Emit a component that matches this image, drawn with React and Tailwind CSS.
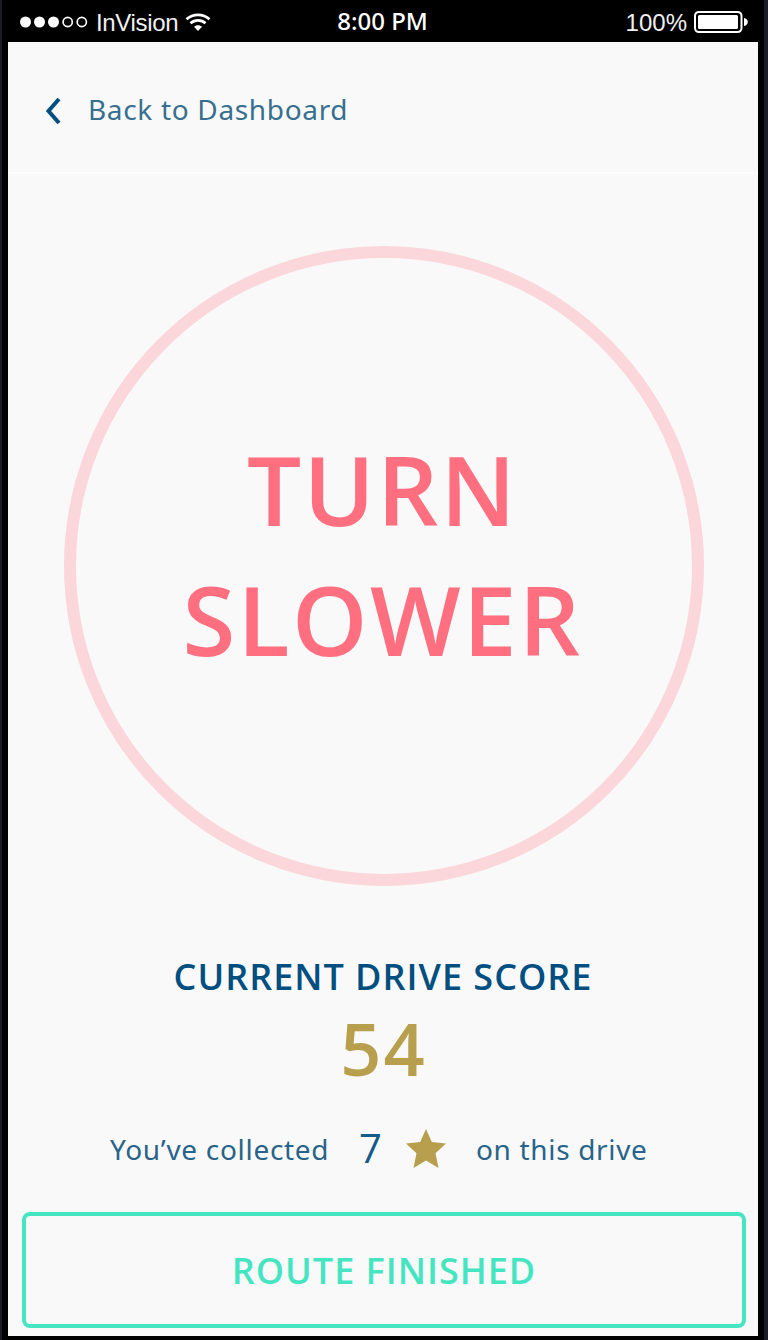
const font = "font-['Open_Sans','Noto_Sans',sans-serif]";

function StatusBar() {
  return (
    <div className="grid h-[42px] grid-cols-3 items-center pl-3 pr-[11px] text-white font-['Liberation_Sans',sans-serif]">
      <div className="flex items-center">
        <svg width="68" height="12" viewBox="0 0 68 12" className="shrink-0">
          <circle cx="5.5" cy="6" r="5.5" fill="white" />
          <circle cx="19.5" cy="6" r="5.5" fill="white" />
          <circle cx="33.5" cy="6" r="5.5" fill="white" />
          <circle cx="47.7" cy="6" r="4.6" fill="none" stroke="white" strokeWidth="1.7" />
          <circle cx="61.8" cy="6" r="4.6" fill="none" stroke="white" strokeWidth="1.7" />
        </svg>
        <span className="ml-2 w-[82px] whitespace-nowrap pt-0.5 text-[24px] leading-[42px] tracking-[-0.35px] text-[#f0f0f0]">InVision</span>
        <svg width="26" height="20" viewBox="0 0 26 20" className="ml-[7px] mt-0.5 shrink-0" fill="none" stroke="white">
          <path d="M1.5 6.2C8 0.4 18 0.4 24.500 6.200" strokeWidth="2.8" />
          <path d="M5.500 10.300C9.800 6.500 16.200 6.500 20.500 10.300" strokeWidth="2.7" />
          <path d="M9 13.800C11 11.700 15 11.700 17 13.800L13 18Z" fill="white" stroke="none" />
        </svg>
      </div>
      <span className="pb-0.5 pr-1 text-center text-[24px] font-medium leading-[38px] font-['Noto_Sans','Open_Sans',sans-serif]">8:00 PM</span>
      <div className="flex items-center justify-end">
        <span className="pt-0.5 text-[24px] leading-[42px] text-[#f0f0f0]">100%</span>
        <svg width="55" height="24" viewBox="0 0 55 24" className="ml-[7px] shrink-0">
          <rect x="1" y="1.900" width="46.500" height="20.200" rx="4" fill="none" stroke="white" strokeWidth="2" />
          <rect x="4" y="5" width="40" height="14" rx="1.500" fill="white" />
          <path d="M50 8C55 8.500 55 15.500 50 16Z" fill="white" />
        </svg>
      </div>
    </div>
  );
}

export default function App() {
  return (
    <div className={`h-[1340px] w-[768px] overflow-hidden border-l-2 border-r-4 border-[#1b1d25] bg-black ${font}`}>
      <div className="pl-1.5 pr-1">
        <StatusBar />
        <main className="h-[1294px] w-[750px] bg-[#f9f9f9] text-[#004f80]">
          <header className="h-[132px] border-b-2 border-[#fdfdfd] pt-[46px]">
            <button className="flex h-[42px] items-center pl-[37px]">
              <svg width="16" height="28" viewBox="0 0 16 28" fill="none" stroke="#004f80" strokeWidth="4" className="mt-1">
                <path d="M14 2L3.500 14L14 26" />
              </svg>
              <span className="ml-[27px] whitespace-nowrap text-[28px] leading-[42px] tracking-[0.67px] text-[#37708f] font-['Noto_Sans',sans-serif]">Back to Dashboard</span>
            </button>
          </header>
          <section className="ml-14 mt-[72px] flex h-[640px] w-[640px] flex-col items-center justify-center rounded-full border-12 border-[#fbd6da] pb-6 pr-[3px] text-[96px] font-semibold leading-[130px] text-[#ff6f80]">
            <span className="tracking-[2.3px]">TURN</span>
            <span className="tracking-[2.3px]">SLOWER</span>
          </section>
          <section className="flex flex-col items-center pt-[66px]">
            <h1 className="text-[36px] font-semibold leading-[50px] tracking-[1px]">CURRENT DRIVE SCORE</h1>
            <p className="mt-px pl-px text-[72px] font-semibold leading-[90px] tracking-[2px] text-[#b79f4d]">54</p>
          </section>
          <section className="mt-9 flex h-10 whitespace-nowrap pl-[102px] text-[28px] leading-10 text-[#286489] font-['Noto_Sans',sans-serif]">
            <span className="w-[249px] tracking-[0.7px]">You’ve collected</span>
            <span className="w-[46px] text-[40px] leading-[37px] text-[#145b89] font-['Open_Sans',sans-serif]">7</span>
            <svg width="42" height="42" viewBox="0 0 42 42" className="shrink-0" fill="#b79f4d">
              <path d="M21 0L26.800 13L41 14.500L30.500 24.300L33.500 39L21 31.500L8.500 39L11.500 24.300L1 14.500L15.200 13Z" />
            </svg>
            <span className="ml-[29px] tracking-[0.67px]">on this drive</span>
          </section>
          <button className="ml-3.5 mt-[43px] flex h-[116px] w-[724px] items-center justify-center rounded-lg border-4 border-[#45e5c2] pt-0.5 text-[36px] font-semibold leading-[50px] tracking-[1px] text-[#45e5c2]">
            ROUTE FINISHED
          </button>
        </main>
      </div>
    </div>
  );
}
